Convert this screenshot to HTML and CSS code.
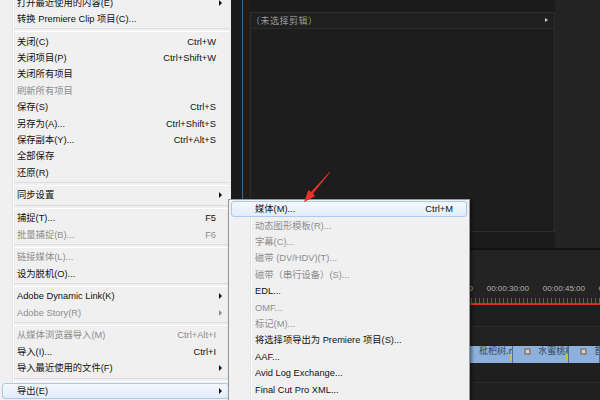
FILE: index.html
```html
<!DOCTYPE html>
<html lang="zh-CN">
<head>
<meta charset="utf-8">
<title>Premiere 文件菜单 - 导出</title>
<link rel="stylesheet" href="styles.css">
</head>
<body>
<div class="menu">
  <ul class="menu-list">
    <li class="item"><span class="label">打开最近使用的内容(E)</span><span class="key"></span><span class="arrow"></span></li>
    <li class="item"><span class="label">转换 Premiere Clip 项目(C)...</span><span class="key"></span><span></span></li>
    <li class="sep"></li>
    <li class="item"><span class="label">关闭(C)</span><span class="key">Ctrl+W</span><span></span></li>
    <li class="item"><span class="label">关闭项目(P)</span><span class="key">Ctrl+Shift+W</span><span></span></li>
    <li class="item"><span class="label">关闭所有项目</span><span class="key"></span><span></span></li>
    <li class="item disabled"><span class="label">刷新所有项目</span><span class="key"></span><span></span></li>
    <li class="item"><span class="label">保存(S)</span><span class="key">Ctrl+S</span><span></span></li>
    <li class="item"><span class="label">另存为(A)...</span><span class="key">Ctrl+Shift+S</span><span></span></li>
    <li class="item"><span class="label">保存副本(Y)...</span><span class="key">Ctrl+Alt+S</span><span></span></li>
    <li class="item"><span class="label">全部保存</span><span class="key"></span><span></span></li>
    <li class="item"><span class="label">还原(R)</span><span class="key"></span><span></span></li>
    <li class="sep"></li>
    <li class="item"><span class="label">同步设置</span><span class="key"></span><span class="arrow"></span></li>
    <li class="sep"></li>
    <li class="item"><span class="label">捕捉(T)...</span><span class="key">F5</span><span></span></li>
    <li class="item disabled"><span class="label">批量捕捉(B)...</span><span class="key">F6</span><span></span></li>
    <li class="sep"></li>
    <li class="item disabled"><span class="label">链接媒体(L)...</span><span class="key"></span><span></span></li>
    <li class="item"><span class="label">设为脱机(O)...</span><span class="key"></span><span></span></li>
    <li class="sep"></li>
    <li class="item"><span class="label">Adobe Dynamic Link(K)</span><span class="key"></span><span class="arrow"></span></li>
    <li class="item disabled"><span class="label">Adobe Story(R)</span><span class="key"></span><span class="arrow"></span></li>
    <li class="sep"></li>
    <li class="item disabled"><span class="label">从媒体浏览器导入(M)</span><span class="key">Ctrl+Alt+I</span><span></span></li>
    <li class="item"><span class="label">导入(I)...</span><span class="key">Ctrl+I</span><span></span></li>
    <li class="item"><span class="label">导入最近使用的文件(F)</span><span class="key"></span><span class="arrow"></span></li>
    <li class="sep"></li>
    <li class="item active"><span class="label">导出(E)</span><span class="key"></span><span class="arrow"></span></li>
  </ul>
</div>

<div class="app">
  <div class="top">
    <div class="gutter"></div>
    <div class="panel">
      <div class="panel-head">
        <span class="panel-title">（未选择剪辑）</span>
        <span class="play"></span>
      </div>
      <div class="panel-body"></div>
    </div>
    <div class="side"></div>
  </div>
  <div class="divider"></div>
  <div class="timeline">
    <div class="ruler">
      <div class="labels">
        <span class="tc">00:00:00:00</span>
        <span class="tc">00:00:15:00</span>
        <span class="tc">00:00:30:00</span>
        <span class="tc">00:00:45:00</span>
        <span class="tc">00:01:00:00</span>
      </div>
      <div class="ticks"></div>
      <div class="redline"></div>
    </div>
    <div class="track t1"></div>
    <div class="track t2"></div>
    <div class="track clips">
      <div class="clip c1"><span class="clip-name">枇杷树.mp4</span></div>
      <div class="clip c2"><span class="clip-icon"></span><span class="clip-name">水蜜桃树.mp4</span></div>
      <div class="clip c3"><span class="clip-icon"></span><span class="clip-name">苜蓿.mp4</span></div>
    </div>
    <div class="track t4"></div>
    <div class="track t5"></div>
  </div>
</div>

<div class="submenu">
  <ul class="sub-list">
    <li class="item active"><span class="label">媒体(M)...</span><span class="key">Ctrl+M</span><span></span></li>
    <li class="item disabled"><span class="label">动态图形模板(R)...</span><span class="key"></span><span></span></li>
    <li class="item disabled"><span class="label">字幕(C)...</span><span class="key"></span><span></span></li>
    <li class="item disabled"><span class="label">磁带 (DV/HDV)(T)...</span><span class="key"></span><span></span></li>
    <li class="item disabled"><span class="label">磁带（串行设备）(S)...</span><span class="key"></span><span></span></li>
    <li class="item"><span class="label">EDL...</span><span class="key"></span><span></span></li>
    <li class="item disabled"><span class="label">OMF...</span><span class="key"></span><span></span></li>
    <li class="item disabled"><span class="label">标记(M)...</span><span class="key"></span><span></span></li>
    <li class="item"><span class="label">将选择项导出为 Premiere 项目(S)...</span><span class="key"></span><span></span></li>
    <li class="item"><span class="label">AAF...</span><span class="key"></span><span></span></li>
    <li class="item"><span class="label">Avid Log Exchange...</span><span class="key"></span><span></span></li>
    <li class="item"><span class="label">Final Cut Pro XML...</span><span class="key"></span><span></span></li>
  </ul>
</div>

<svg class="pointer" width="600" height="400" viewBox="0 0 600 400" aria-hidden="true">
  <polygon points="330.3,172.2 312.9,193.8 315.4,196.1 304,202.3 308.4,189.9 311.0,192.1 329.8,171.7" fill="#e6322a"/>
</svg>
</body>
</html>
```

FILE: styles.css
```css
* { box-sizing: border-box; }

html, body {
  margin: 0;
  padding: 0;
}

body {
  width: 600px;
  height: 400px;
  overflow: hidden;
  position: relative;
  display: grid;
  grid-template-columns: 231px 1fr;
  font-family: "Liberation Sans", "Noto Sans CJK SC", sans-serif;
  background: #1e1e1e;
}

ul { list-style: none; margin: 0; padding: 0; }

/* ---------- Windows style menus ---------- */
.menu {
  background-color: #f0f0f0;
  background-image: linear-gradient(to right,
    transparent 12px, #e2e3e3 12px, #e2e3e3 13px, #ffffff 13px, #ffffff 14px, transparent 14px);
  padding: 0 2px;
  overflow: hidden;
}

.menu-list {
  margin-top: -5.6px;
}

.item {
  display: grid;
  grid-template-columns: 1fr auto 12px;
  align-items: center;
  height: 16.4px;
  line-height: 16.4px;
  padding-left: 14px;
  font-size: 9.3px;
  color: #111;
  white-space: nowrap;
  border: 1px solid transparent;
  border-radius: 3px;
}

.item .label { line-height: 14px; }
.item .key { line-height: 14px; }

.item.disabled { color: #8d8d8d; }

.item.active {
  border-color: #a9c9ee;
  background: linear-gradient(#f4f8fd, #e2ecf9);
}

.arrow {
  justify-self: start;
  margin-left: 3px;
  width: 0;
  height: 0;
  border-top: 3px solid transparent;
  border-bottom: 3px solid transparent;
  border-left: 3px solid #111;
}

.disabled .arrow { border-left-color: #8d8d8d; }

.sep {
  height: 6.3px;
  margin-left: 12px;
  display: flex;
  align-items: center;
}

.sep::before {
  content: "";
  flex: 1;
  height: 2px;
  border-top: 1px solid #dcdcdc;
  border-bottom: 1px solid #ffffff;
}

/* submenu (flyout over the dark app) */
.submenu {
  position: absolute;
  left: 228px;
  top: 199px;
  width: 242px;
  height: 215px;
  border: 1px solid #979797;
  background-color: #f0f0f0;
  background-image: linear-gradient(to right,
    transparent 21px, #e2e3e3 21px, #e2e3e3 22px, #ffffff 22px, #ffffff 23px, transparent 23px);
  box-shadow: 2px 2px 3px rgba(0, 0, 0, 0.45);
  padding: 1.1px 2px;
}

.sub-list .item {
  grid-template-columns: 1fr auto 13px;
  padding-left: 23px;
}

/* ---------- dark application area ---------- */
.app {
  display: flex;
  flex-direction: column;
  background: #202020;
  min-width: 0;
}

.top {
  height: 248px;
  display: flex;
  background: #1b1b1b;
}

.gutter {
  width: 19px;
  flex: none;
  background: linear-gradient(to right,
    #1a1a1a 11px, #336a96 11px, #336a96 12px, #1e1e1e 12px);
}

.panel {
  width: 305px;
  flex: none;
  margin-top: 11.7px;
  height: 220.3px;
  border: 1px solid #2d2d2d;
  background: #1d1d1d;
  display: flex;
  flex-direction: column;
}

.panel-head {
  height: 16px;
  flex: none;
  display: flex;
  align-items: center;
  justify-content: space-between;
  padding: 0 6px 0 0;
  border-bottom: 1px solid #2c2c2c;
  background: #202020;
}

.panel-title {
  font-size: 9px;
  letter-spacing: 0.5px;
  color: #9c9c9c;
  font-family: "Noto Sans CJK SC", sans-serif;
}

.play {
  width: 0;
  height: 0;
  border-top: 2.5px solid transparent;
  border-bottom: 2.5px solid transparent;
  border-left: 3.5px solid #d0d0d0;
}

.panel-body { flex: 1; }

.side {
  flex: 1;
  background: #232323;
}

.divider {
  height: 2px;
  flex: none;
  background: #121212;
}

/* ---------- timeline ---------- */
.timeline {
  flex: 1;
  background: #232323;
  display: flex;
  flex-direction: column;
}

.ruler {
  height: 55px;
  flex: none;
  padding-top: 33px;
  display: flex;
  flex-direction: column;
}

.labels {
  height: 12px;
  display: flex;
  padding-left: 143.7px;
  white-space: nowrap;
}

.tc {
  width: 56px;
  flex: none;
  font-size: 8px;
  line-height: 12px;
  color: #b5b5b5;
}

.ticks {
  height: 8px;
  background:
    repeating-linear-gradient(to right, #5e5e5e 0, #5e5e5e 1px, transparent 1px, transparent 4px)
    0 100% / 100% 5px no-repeat;
}

.redline {
  height: 2px;
  background: #d8301d;
}

.track { flex: none; }

.t1 { height: 22px; background: #1e1e1e; border-bottom: 1px solid #2b2b2b; }
.t2 { height: 18px; background: #212121; }

.clips {
  height: 19px;
  padding: 1px 0 1px 209px;
  display: flex;
  background: #1f1f1f;
}

.clip {
  position: relative;
  height: 17px;
  background: #8db1dc;
  border-right: 1px solid #4e6f98;
  display: flex;
  align-items: flex-start;
  overflow: hidden;
  white-space: nowrap;
  font-family: "Noto Sans CJK SC", sans-serif;
  font-size: 9px;
  line-height: 10px;
  color: #34465c;
}

.c1 { width: 73.3px; padding-left: 39px; }
.c2 { width: 56px; padding-left: 11px; }
.c3 { flex: 1; padding-left: 11px; }

.c1::after, .c2::after {
  content: "";
  position: absolute;
  right: 0;
  bottom: 2px;
  width: 2px;
  height: 7px;
  background: #d7b84c;
}

.clip-icon {
  width: 7px;
  height: 7px;
  margin-top: 2px;
  margin-right: 7px;
  flex: none;
  background: #d3d3d3;
  border: 2px solid #8a8a8a;
}

.t4 { height: 19px; background: #1f1f1f; border-bottom: 1px solid #2b2b2b; }
.t5 { flex: 1; background: #202020; }

/* annotation arrow drawn over everything */
.pointer {
  position: absolute;
  left: 0;
  top: 0;
  pointer-events: none;
}
```
